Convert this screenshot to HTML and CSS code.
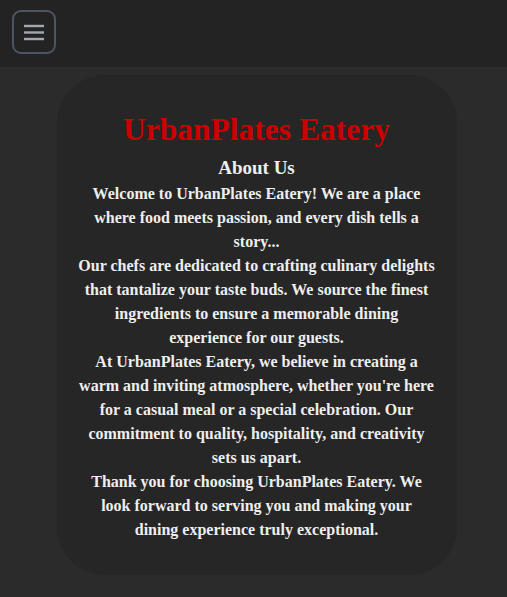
FILE: index.html
```html
<!DOCTYPE html>
<html>
<head>
<meta charset="utf-8">
<link rel="stylesheet" href="styles.css">
</head>
<body>
<header class="topbar">
  <button class="menu-btn" aria-label="Menu">
    <svg width="22" height="18" viewBox="0 0 22 18"><g stroke="#a3a8b0" stroke-width="2.4"><line x1="1" y1="3" x2="21" y2="3"/><line x1="1" y1="9.5" x2="21" y2="9.5"/><line x1="1" y1="16" x2="21" y2="16"/></g></svg>
  </button>
</header>
<main class="page">
  <section class="card">
    <h1 class="title">UrbanPlates Eatery</h1>
    <h2 class="subtitle">About Us</h2>
    <p class="text">Welcome to UrbanPlates Eatery! We are a place where food meets passion, and every dish tells a story...<br>Our chefs are dedicated to crafting culinary delights that tantalize your taste buds. We source the finest ingredients to ensure a memorable dining experience for our guests.<br>At UrbanPlates Eatery, we believe in creating a warm and inviting atmosphere, whether you're here for a casual meal or a special celebration. Our commitment to quality, hospitality, and creativity sets us apart.<br>Thank you for choosing UrbanPlates Eatery. We look forward to serving you and making your dining experience truly exceptional.</p>
  </section>
</main>
</body>
</html>
```
FILE: styles.css
```css
html, body { margin: 0; padding: 0; }
body {
  background: #2b2b2b;
  font-family: "Liberation Serif", "DejaVu Serif", serif;
  color: #eeeeee;
  height: 597px;
  overflow: hidden;
}
.topbar {
  height: 67px;
  background: #232323;
  padding: 10px 12px;
  box-sizing: border-box;
}
.menu-btn {
  width: 44px;
  height: 44px;
  border: 2px solid #4b5563;
  border-radius: 9px;
  background: transparent;
  display: flex;
  align-items: center;
  justify-content: center;
  padding: 0;
}
.page {
  display: flex;
  justify-content: center;
  padding: 8px 0 0 6px;
}
.card {
  width: 400px;
  height: 500px;
  box-sizing: border-box;
  background: #262626;
  border-radius: 48px;
  padding: 36px 21.5px 0;
  text-align: center;
}
.title {
  margin: 0;
  color: #cc0000;
  font-size: 31.5px;
  font-weight: bold;
  line-height: 38px;
}
.subtitle {
  margin: 6px 0 0;
  font-size: 19px;
  font-weight: bold;
  line-height: 26px;
  color: #eeeeee;
}
.text {
  margin: 1px 0 0;
  font-size: 16px;
  font-weight: bold;
  line-height: 24px;
  color: #eeeeee;
}
```
